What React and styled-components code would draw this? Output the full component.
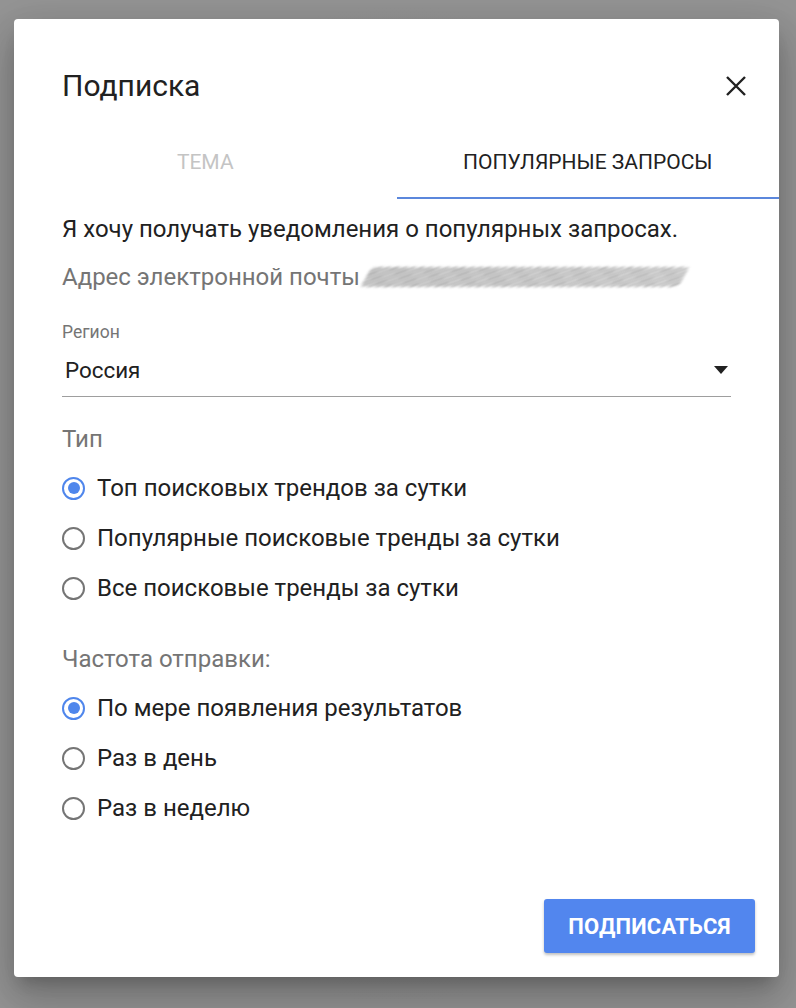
import React, { useState } from "react";
import styled, { createGlobalStyle } from "styled-components";

const Global = createGlobalStyle`
  html, body { margin: 0; padding: 0; }
  body {
    background: #959595;
    font-family: Roboto, "Noto Sans", Arial, sans-serif;
    width: 796px;
    height: 1008px;
    overflow: hidden;
  }
`;

const Backdrop = styled.div`
  width: 796px;
  height: 1008px;
  padding: 19px 0 0 14px;
  box-sizing: border-box;
  background: radial-gradient(ellipse at 50% 50%, #8a8a8a 0%, #959595 70%);
`;

const Dialog = styled.div`
  width: 765px;
  height: 958px;
  background: #fff;
  border-radius: 4px;
  box-shadow: 0 11px 15px -7px rgba(0,0,0,.2), 0 24px 38px 3px rgba(0,0,0,.14), 0 9px 46px 8px rgba(0,0,0,.12);
  display: flex;
  flex-direction: column;
  box-sizing: border-box;
  color: #212121;
`;

const Header = styled.div`
  display: flex;
  align-items: center;
  justify-content: space-between;
  height: 108px;
  padding: 26px 30px 0 48px;
  box-sizing: border-box;
`;

const Title = styled.h2`
  margin: 0;
  font-size: 30px;
  line-height: 36px;
  font-weight: 400;
  color: #212121;
`;

const CloseButton = styled.button`
  border: 0;
  background: none;
  padding: 0;
  width: 26px;
  height: 26px;
  display: flex;
  align-items: center;
  justify-content: center;
  cursor: pointer;
`;

const Tabs = styled.div`
  display: flex;
  height: 72px;
`;

const Tab = styled.div`
  flex: 1;
  display: flex;
  align-items: center;
  justify-content: center;
  font-size: 21px;
  text-transform: uppercase;
  color: ${p => (p.$active ? "#212121" : "#c4c4c4")};
  border-bottom: 2px solid ${p => (p.$active ? "#5b87dc" : "transparent")};
  box-sizing: border-box;
`;

const Body = styled.div`
  flex: 1;
  display: flex;
  flex-direction: column;
  padding: 14px 48px 0 48px;
`;

const Intro = styled.p`
  margin: 0;
  font-size: 24px;
  line-height: 32px;
  color: #212121;
`;

const EmailRow = styled.div`
  display: flex;
  align-items: center;
  margin-top: 16px;
  font-size: 24px;
  line-height: 32px;
  color: #757575;
`;

const Blur = styled.span`
  display: inline-block;
  width: 318px;
  height: 20px;
  margin-left: 6px;
  background:
    repeating-linear-gradient(
      -24deg,
      rgba(95,95,95,0.85) 0 1.3px,
      rgba(255,255,255,0) 1.3px 3.4px
    ),
    linear-gradient(90deg, rgba(200,200,200,0.55), rgba(220,220,220,0.45));
  filter: blur(1.5px);
  opacity: 0.85;
  border-radius: 4px;
  transform: skewX(-30deg);
`;

const SelectField = styled.div`
  margin-top: 28px;
  display: flex;
  flex-direction: column;
`;

const FieldLabel = styled.label`
  font-size: 17.5px;
  line-height: 22px;
  color: #757575;
`;

const SelectBox = styled.div`
  display: flex;
  align-items: center;
  justify-content: space-between;
  height: 52px;
  padding: 0 3px;
  border-bottom: 1px solid #9e9e9e;
  font-size: 22.4px;
  color: #212121;
  margin-top: 1px;
`;

const GroupLabel = styled.div`
  margin-top: ${p => p.$gap || 26}px;
  font-size: 24px;
  line-height: 32px;
  color: #757575;
`;

const RadioList = styled.div`
  display: flex;
  flex-direction: column;
  margin-top: 8px;
`;

const RadioRow = styled.label`
  display: flex;
  align-items: center;
  height: 50px;
  font-size: 24px;
  color: #212121;
  cursor: pointer;
`;

const Circle = styled.span`
  width: 23px;
  height: 23px;
  box-sizing: border-box;
  border-radius: 50%;
  border: 2.5px solid ${p => (p.$on ? "#4f86ec" : "#757575")};
  display: flex;
  align-items: center;
  justify-content: center;
  margin-right: 12px;
  flex-shrink: 0;
  &::after {
    content: "";
    width: 12px;
    height: 12px;
    border-radius: 50%;
    background: ${p => (p.$on ? "#4f86ec" : "transparent")};
  }
`;

const Footer = styled.div`
  display: flex;
  justify-content: flex-end;
  padding: 0 24px 24px 0;
`;

const PrimaryButton = styled.button`
  width: 211px;
  height: 54px;
  border: 0;
  border-radius: 3px;
  background: #5286ee;
  color: #fff;
  font-family: Roboto, Arial, sans-serif;
  font-size: 22px;
  font-weight: 700;
  letter-spacing: 0.2px;
  text-transform: uppercase;
  box-shadow: 0 2px 3px rgba(0,0,0,.25);
  cursor: pointer;
`;

function Radio({ checked, label, onClick }) {
  return (
    <RadioRow onClick={onClick}>
      <Circle $on={checked} />
      {label}
    </RadioRow>
  );
}

export default function App() {
  const [type, setType] = useState(0);
  const [freq, setFreq] = useState(0);
  const types = [
    "Топ поисковых трендов за сутки",
    "Популярные поисковые тренды за сутки",
    "Все поисковые тренды за сутки",
  ];
  const freqs = ["По мере появления результатов", "Раз в день", "Раз в неделю"];
  return (
    <>
      <Global />
      <Backdrop>
        <Dialog>
          <Header>
            <Title>Подписка</Title>
            <CloseButton aria-label="Закрыть">
              <svg width="22" height="22" viewBox="0 0 22 22">
                <path d="M2 2 L20 20 M20 2 L2 20" stroke="#212121" strokeWidth="2.4" />
              </svg>
            </CloseButton>
          </Header>
          <Tabs>
            <Tab>Тема</Tab>
            <Tab $active>Популярные запросы</Tab>
          </Tabs>
          <Body>
            <Intro>Я хочу получать уведомления о популярных запросах.</Intro>
            <EmailRow>
              Адрес электронной почты
              <Blur />
            </EmailRow>
            <SelectField>
              <FieldLabel>Регион</FieldLabel>
              <SelectBox>
                <span>Россия</span>
                <svg width="14" height="8" viewBox="0 0 14 8">
                  <path d="M0 0 H14 L7 8 Z" fill="#212121" />
                </svg>
              </SelectBox>
            </SelectField>
            <GroupLabel $gap={26}>Тип</GroupLabel>
            <RadioList>
              {types.map((t, i) => (
                <Radio key={t} label={t} checked={type === i} onClick={() => setType(i)} />
              ))}
            </RadioList>
            <GroupLabel $gap={30}>Частота отправки:</GroupLabel>
            <RadioList>
              {freqs.map((t, i) => (
                <Radio key={t} label={t} checked={freq === i} onClick={() => setFreq(i)} />
              ))}
            </RadioList>
          </Body>
          <Footer>
            <PrimaryButton>Подписаться</PrimaryButton>
          </Footer>
        </Dialog>
      </Backdrop>
    </>
  );
}
